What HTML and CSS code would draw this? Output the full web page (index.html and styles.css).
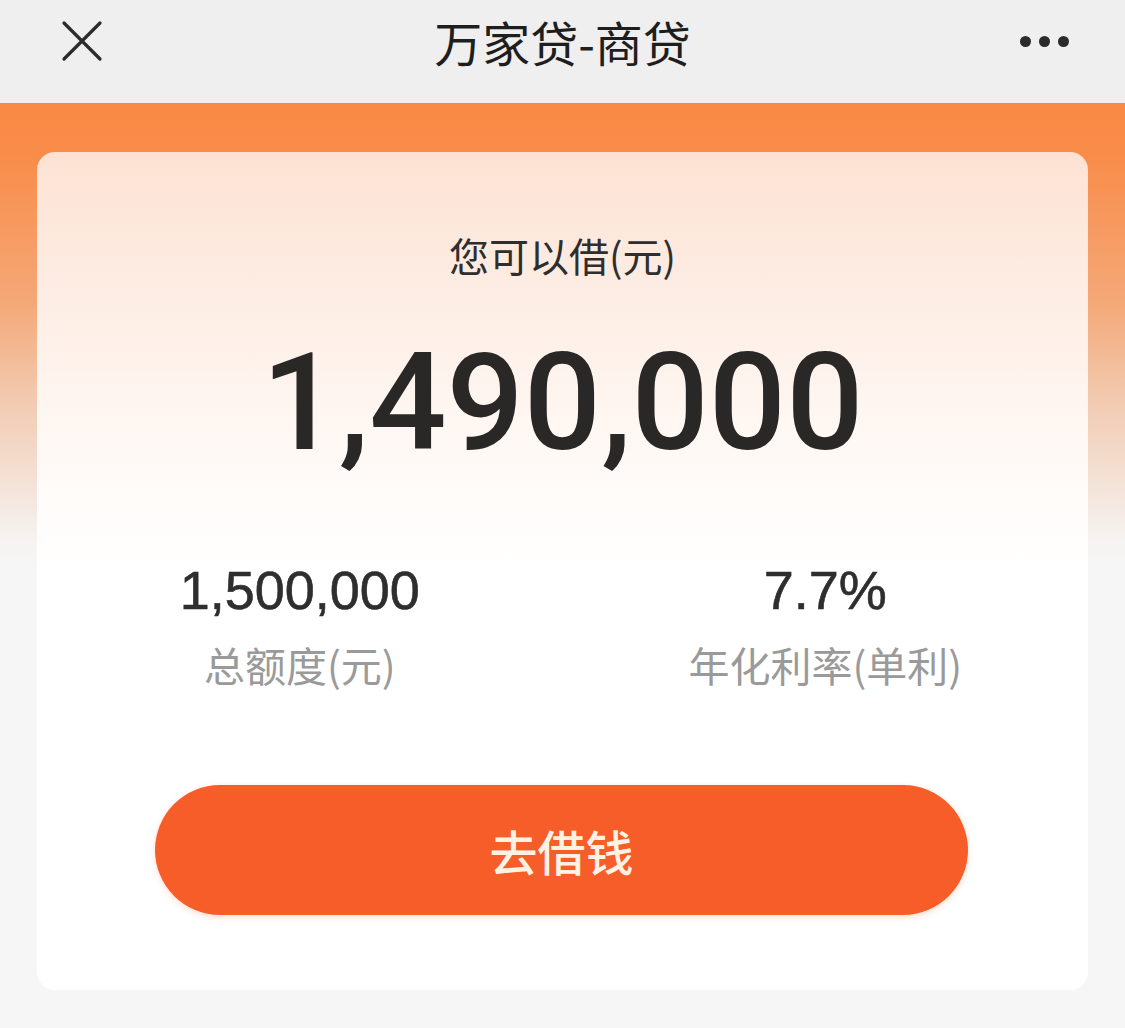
FILE: index.html
```html
<!DOCTYPE html>
<html>
<head>
    <meta charset="utf-8">
    <title>万家贷-商贷</title>
    <link rel="stylesheet" href="styles.css">
</head>
<body>
    <header class="topbar">
        <span class="close">
            <svg width="44" height="44" viewBox="0 0 44 44">
                <path d="M4 4 L40 40 M40 4 L4 40" stroke="#2b2b2b" stroke-width="3.2" stroke-linecap="round"/>
            </svg>
        </span>
        <span class="title">万家贷-商贷</span>
        <span class="more">
            <i></i><i></i><i></i>
        </span>
    </header>

    <div class="banner">
        <div class="card">
            <div class="label">您可以借(元)</div>
            <div class="amount">1,490,000</div>

            <div class="stats">
                <div class="stat">
                    <div class="stat-num">1,500,000</div>
                    <div class="stat-label">总额度(元)</div>
                </div>
                <div class="stat">
                    <div class="stat-num">7.7%</div>
                    <div class="stat-label">年化利率(单利)</div>
                </div>
            </div>

            <button class="borrow">去借钱</button>
        </div>
    </div>
</body>
</html>
```

FILE: styles.css
```css
body {
    margin: 0;
    background-color: #f6f6f6;
    font-family: "Liberation Sans", "Noto Sans CJK SC", sans-serif;
    color: #2b2b2b;
}

.topbar {
    height: 103px;
    background-color: #efefef;
    display: flex;
    align-items: center;
    justify-content: space-between;
    padding: 0 52px 0 60px;
    box-sizing: border-box;
    position: relative;
}

.close {
    display: flex;
    padding-bottom: 22px;
}

.title {
    position: absolute;
    left: 0;
    right: 0;
    top: 14px;
    text-align: center;
    font-family: "Noto Sans CJK SC", sans-serif;
    font-size: 48px;
    line-height: 54px;
    font-weight: 400;
    color: #1e1e1e;
}

.more {
    display: flex;
    gap: 8px;
    padding-bottom: 20px;
    margin-right: 4px;
}

.more i {
    width: 11px;
    height: 11px;
    border-radius: 50%;
    background-color: #2b2b2b;
}

.banner {
    padding: 49px 37px 38px 37px;
    background: linear-gradient(#f98a45 0, #f98c49 50px, #f4a878 200px, #f2cbb2 300px, #f4e8e0 400px, #f6f4f2 440px, #f6f6f6 460px);
}

.card {
    height: 838px;
    border-radius: 18px;
    background: linear-gradient(#fde2d3 0, #fdebe1 120px, #fef6f1 260px, #fffcfa 350px, #ffffff 420px);
    box-sizing: border-box;
    padding-top: 80px;
    text-align: center;
}

.label {
    font-family: "Noto Sans CJK SC", sans-serif;
    font-size: 40px;
    line-height: 46px;
    font-weight: 400;
    color: #2e2e2e;
}

.amount {
    font-family: "Roboto", "Liberation Sans", sans-serif;
    font-size: 136px;
    line-height: 150px;
    font-weight: 500;
    color: #2a2826;
    margin-top: 50px;
}

.stats {
    display: grid;
    grid-template-columns: 1fr 1fr;
    margin-top: 82px;
}

.stat-num {
    font-size: 54px;
    line-height: 60px;
    color: #2e2e2e;
    -webkit-text-stroke: 0.6px #2e2e2e;
}

.stat-label {
    font-family: "Noto Sans CJK SC", sans-serif;
    font-size: 41px;
    line-height: 50px;
    color: #9a9a9a;
    margin-top: 19px;
}

.borrow {
    display: block;
    width: 813px;
    height: 130px;
    margin: 96px 0 0 118px;
    border: none;
    border-radius: 65px;
    background-color: #f65d29;
    box-shadow: 0 2px 6px rgba(240, 110, 60, 0.25);
    color: #fff2e4;
    font-family: "Noto Sans CJK SC", sans-serif;
    font-size: 48px;
    font-weight: 500;
}
```
